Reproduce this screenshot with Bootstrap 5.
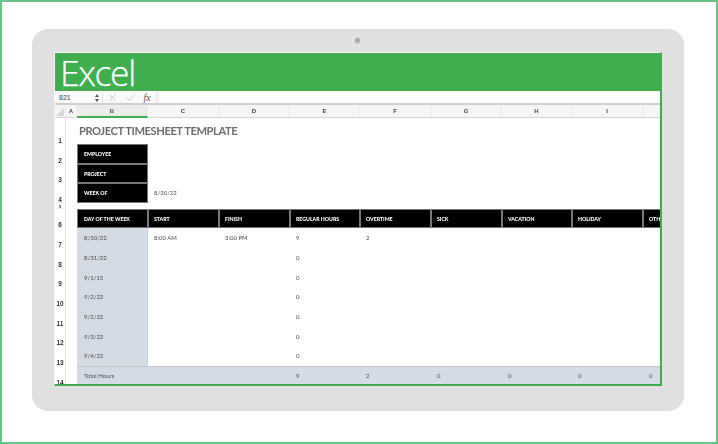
<!DOCTYPE html>
<html lang="en">
<head>
<meta charset="utf-8">
<title>Project Timesheet Template</title>
<link href="https://cdn.jsdelivr.net/npm/bootstrap@5.3.0/dist/css/bootstrap.min.css" rel="stylesheet">
<style>
html,body{margin:0;background:#fff;height:444px;overflow:hidden}
.page-frame{width:718px;height:444px;border:2px solid #66c285;padding:27px 32px 31px 30px}
.device{height:382px;background:#e0e0e0;border-radius:16px;padding:23px 22px 0;position:relative}
.camera{position:absolute;left:321px;top:7px;width:9px;height:9px;border-radius:50%;background:#a9a9a9;border:2px solid #d9d9d9;box-shadow:0 0 0 1px #ececec;filter:blur(.4px)}
.screen{height:334px;background:#fff;border-left:1px solid #f4f4f4;border-top:1px solid #f4f4f4;border-right:2px solid #3fae4e;border-bottom:2px solid #3fae4e;overflow:hidden}
.app-head{height:38px;background:#3fae4e;color:#fff;font:300 35.500px/38px "Open Sans",sans-serif;letter-spacing:-1.35px;padding-left:5px;margin-right:-2px;-webkit-text-stroke:.25px #fff}
.formula-bar{height:14px;padding-top:1px;background:#fafafa;border-bottom:2px solid #cfcfcf;font:7px/12px "Liberation Sans",sans-serif;color:#444}
.name-box{width:37px;padding-left:4px}
.spin{width:10px}
.fbtn{width:18px}
.fx{font:italic 10px/12px "Liberation Serif",serif;color:#555;width:16px;text-align:center}
.vsep{width:1px;height:11px;background:#e6e6e6}
.fx-gap{margin-left:1px}
.fx-input{background:#fff;height:10px;margin-left:1px;flex:1;border-left:1px solid #eee}
.sheet-wrap{overflow:hidden;height:281px;font-family:"Lato",sans-serif;filter:blur(.25px)}
.sheet{table-layout:fixed;width:655px;border-collapse:separate;border-spacing:0;margin:0}
.sheet td,.sheet th{padding:0 0 0 6px;white-space:nowrap;overflow:hidden;font-size:6px;line-height:8px;color:#4c4c4c;font-weight:400;border:0;vertical-align:middle;background:#fff}
.sheet td.col-b{padding-left:7px}
.sheet thead th{height:13px;background:#f6f6f6;border-bottom:1px solid #d4d4d4;border-right:1px solid #ececec;text-align:center;padding:0;font:700 6px/8px "Liberation Sans",sans-serif;color:#444}
.sheet thead th.active-col{background:#ececea;border-bottom:2px solid #3fae4e;color:#555}
.sheet th.corner{position:relative}
.corner-mark{position:absolute;right:1px;bottom:1px}
.sheet th.rownum{background:#fff;padding:0;text-align:center;vertical-align:bottom;font:700 6.5px/6px "Liberation Sans",sans-serif;color:#333;border-right:1px solid #e4e4e4;box-shadow:inset 0 -1px 0 #f0f0f0}
.sheet th.rownum-thin{font-size:4px;line-height:4px}
.r26{height:26px}.r20{height:20px}.r19{height:19px}.r6{height:6px}
.sheet td.title-cell{font-size:11.2px;line-height:14px;font-weight:700;color:#6d6d6d;padding:0 0 0 2px;letter-spacing:-.45px}
.sheet td.dark{background:#000;color:#fff;font-weight:900;font-size:5.2px;box-shadow:inset 1px 0 0 #777,inset -1px 0 0 #777,inset 0 1px 0 #777,inset 0 -1px 0 #777}
.sheet td.day{background:#d5dbe5;box-shadow:inset -1px 0 0 #c9ced8}
.sheet td.total{background:#d5dbe5;box-shadow:inset 0 1px 0 #c8c8c8}
.c11{width:11px}.c70{width:70px}.c71{width:71px}.c67{width:67px}
</style>
</head>
<body>
<div class="page-frame">
 <div class="device">
  <div class="camera"></div>
  <div class="screen">
   <div class="app-head">Excel</div>
   <div class="formula-bar d-flex align-items-center">
    <div class="name-box">821</div>
    <svg class="spin" width="10" height="12" viewBox="0 0 10 12"><path d="M3 5 5 2l2 3zM3 7l2 3 2-3z" fill="#555"/></svg>
    <div class="vsep"></div>
    <div class="fbtn d-flex justify-content-center"><svg width="9" height="9" viewBox="0 0 9 9"><path d="M1.500 1.500l6 6M7.500 1.500l-6 6" stroke="#c4c4c4" fill="none"/></svg></div>
    <div class="fbtn d-flex justify-content-center"><svg width="9" height="9" viewBox="0 0 9 9"><path d="M1 5l2.500 2.500L8 2" stroke="#c4c4c4" fill="none"/></svg></div>
    <div class="fx">fx</div>
    <div class="vsep fx-gap"></div>
    <div class="fx-input"></div>
   </div>
   <div class="sheet-wrap">
    <table class="sheet">
     <colgroup><col class="c11"><col class="c11"><col class="c71"><col class="c71"><col class="c71"><col class="c70"><col class="c71"><col class="c71"><col class="c70"><col class="c71"><col class="c67"></colgroup>
     <thead><tr>
      <th class="corner"><svg class="corner-mark" width="8" height="8" viewBox="0 0 8 8"><path d="M8 0v8H0z" fill="#d8d8d8"/></svg></th>
      <th>A</th><th class="active-col">B</th><th>C</th><th>D</th><th>E</th><th>F</th><th>G</th><th>H</th><th>I</th><th>J</th>
     </tr></thead>
     <tbody>
      <tr class="r26"><th class="rownum">1</th><td></td><td class="title-cell" colspan="4">PROJECT TIMESHEET TEMPLATE</td><td colspan="5"></td></tr>
      <tr class="r20"><th class="rownum">2</th><td></td><td class="dark col-b">EMPLOYEE</td><td colspan="8"></td></tr>
      <tr class="r19"><th class="rownum">3</th><td></td><td class="dark col-b">PROJECT</td><td colspan="8"></td></tr>
      <tr class="r20"><th class="rownum">4</th><td></td><td class="dark col-b">WEEK OF</td><td>8/30/22</td><td colspan="7"></td></tr>
      <tr class="r6"><th class="rownum rownum-thin">5</th><td colspan="10"></td></tr>
      <tr class="r19"><th class="rownum">6</th><td></td><td class="dark col-b">DAY OF THE WEEK</td><td class="dark">START</td><td class="dark">FINISH</td><td class="dark">REGULAR HOURS</td><td class="dark">OVERTIME</td><td class="dark">SICK</td><td class="dark">VACATION</td><td class="dark">HOLIDAY</td><td class="dark">OTHER</td></tr>
      <tr class="r20"><th class="rownum">7</th><td></td><td class="day col-b">8/30/22</td><td>8:00 AM</td><td>3:00 PM</td><td>9</td><td>2</td><td colspan="4"></td></tr>
      <tr class="r20"><th class="rownum">8</th><td></td><td class="day col-b">8/31/22</td><td colspan="2"></td><td>0</td><td colspan="5"></td></tr>
      <tr class="r19"><th class="rownum">9</th><td></td><td class="day col-b">9/1/15</td><td colspan="2"></td><td>0</td><td colspan="5"></td></tr>
      <tr class="r20"><th class="rownum">10</th><td></td><td class="day col-b">9/2/22</td><td colspan="2"></td><td>0</td><td colspan="5"></td></tr>
      <tr class="r20"><th class="rownum">11</th><td></td><td class="day col-b">9/2/22</td><td colspan="2"></td><td>0</td><td colspan="5"></td></tr>
      <tr class="r19"><th class="rownum">12</th><td></td><td class="day col-b">9/3/22</td><td colspan="2"></td><td>0</td><td colspan="5"></td></tr>
      <tr class="r20"><th class="rownum">13</th><td></td><td class="day col-b">9/4/22</td><td colspan="2"></td><td>0</td><td colspan="5"></td></tr>
      <tr class="r20"><th class="rownum">14</th><td></td><td class="total col-b">Total Hours</td><td class="total"></td><td class="total"></td><td class="total">9</td><td class="total">2</td><td class="total">0</td><td class="total">0</td><td class="total">0</td><td class="total">0</td></tr>
     </tbody>
    </table>
   </div>
  </div>
 </div>
</div>
<script src="https://cdn.jsdelivr.net/npm/bootstrap@5.3.0/dist/js/bootstrap.bundle.min.js"></script>
</body>
</html>
